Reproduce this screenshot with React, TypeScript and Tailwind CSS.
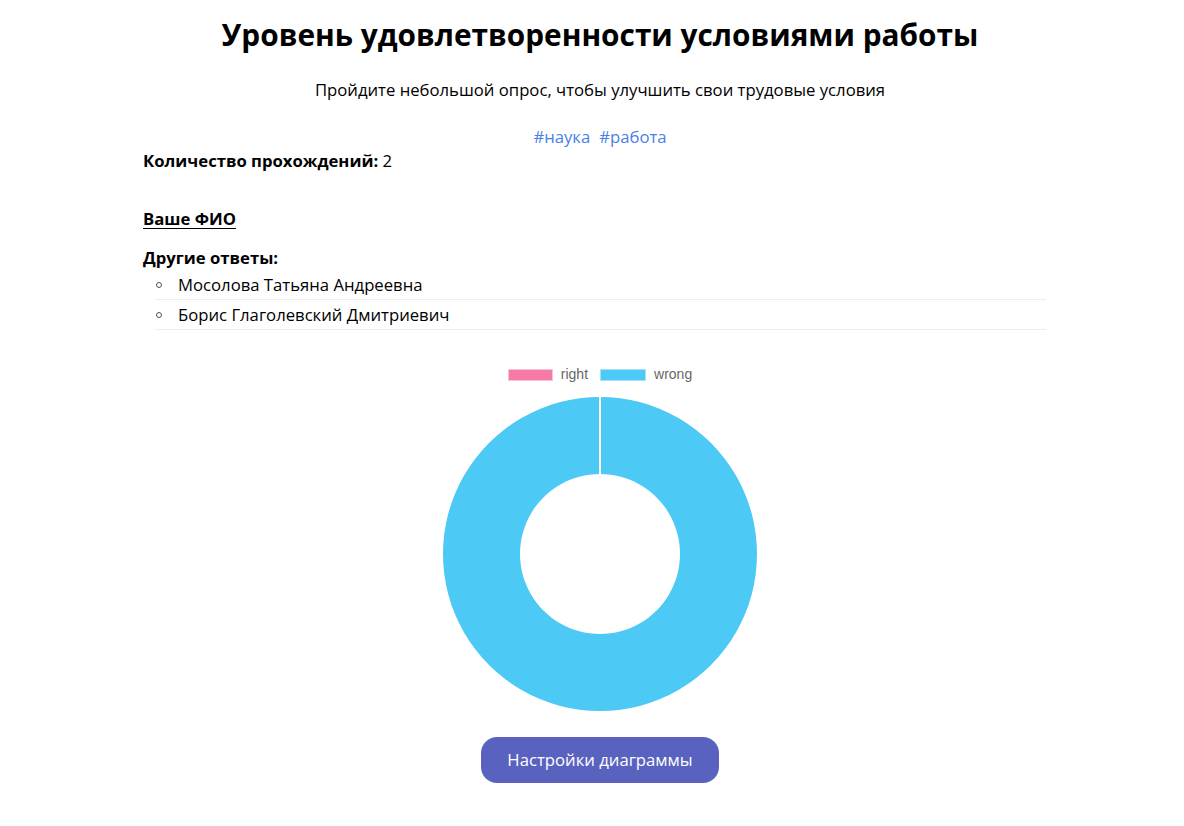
const answers = ['Мосолова Татьяна Андреевна', 'Борис Глаголевский Дмитриевич'];

function Donut() {
    // full ring "wrong", zero-width "right" slice shows as a white seam at the top
    const cx = 158, cy = 158, R = 157, r = 80;
    const ring = `M ${cx} ${cy - R} A ${R} ${R} 0 1 1 ${cx - 0.01} ${cy - R} Z M ${cx} ${cy - r} A ${r} ${r} 0 1 0 ${cx + 0.01} ${cy - r} Z`;
    return (
        <svg width="316" height="316" viewBox="0 0 316 316">
            <path d={ring} fill="#4dc9f6" fillRule="evenodd" />
            <line x1={cx} y1={cy - R - 1} x2={cx} y2={cy - r + 1} stroke="#ffffff" strokeWidth="2" />
        </svg>
    );
}

export default function App() {
    return (
        <div className="flex justify-center pl-4 bg-white text-black font-['Open_Sans',sans-serif]">
            <div className="w-[914px]">
                <h1 className="mt-[17px] text-center text-[29.8px] leading-[36px] font-bold">
                    Уровень удовлетворенности условиями работы
                </h1>
                <p className="mt-[25px] text-center text-[16.7px] leading-[24px]">
                    Пройдите небольшой опрос, чтобы улучшить свои трудовые условия
                </p>
                <div className="mt-[23px] flex justify-center gap-[9px] text-[16.7px] leading-[24px] text-[#4a7fe6]">
                    <span>#наука</span>
                    <span>#работа</span>
                </div>
                <p className="text-[16.7px] leading-[23px]">
                    <span className="font-bold">Количество прохождений:</span> 2
                </p>

                <p className="mt-[35px] text-[16.7px] leading-[24px] font-bold underline underline-offset-[3px]">Ваше ФИО</p>

                <p className="mt-[15px] text-[16.7px] leading-[24px] font-bold">Другие ответы:</p>
                <ul className="ml-[12px] mr-[11px]">
                    {answers.map((name) => (
                        <li key={name} className="flex items-center h-[30px] border-b border-[#eeeeee] text-[16.7px]">
                            <span className="ml-[1px] w-[6px] h-[6px] rounded-full border border-[#555]" />
                            <span className="ml-[16px]">{name}</span>
                        </li>
                    ))}
                </ul>

                <div className="mt-[34px] flex justify-center items-center font-['Liberation_Sans',sans-serif] text-[14px] text-[#666666]">
                    <span className="w-[45px] h-[12px] bg-[#f67aa7] border border-[#fbc1d6]" />
                    <span className="ml-[8px]">right</span>
                    <span className="ml-[12px] w-[46px] h-[12px] bg-[#4dc9f6] border border-[#a5e3fa]" />
                    <span className="ml-[8px]">wrong</span>
                </div>
                <div className="mt-[11px] flex justify-center">
                    <Donut />
                </div>

                <div className="mt-[25px] flex justify-center">
                    <button className="w-[238px] h-[46px] rounded-[16px] bg-[#5a62c0] text-white text-[16.7px]">
                        Настройки диаграммы
                    </button>
                </div>
            </div>
        </div>
    );
}
